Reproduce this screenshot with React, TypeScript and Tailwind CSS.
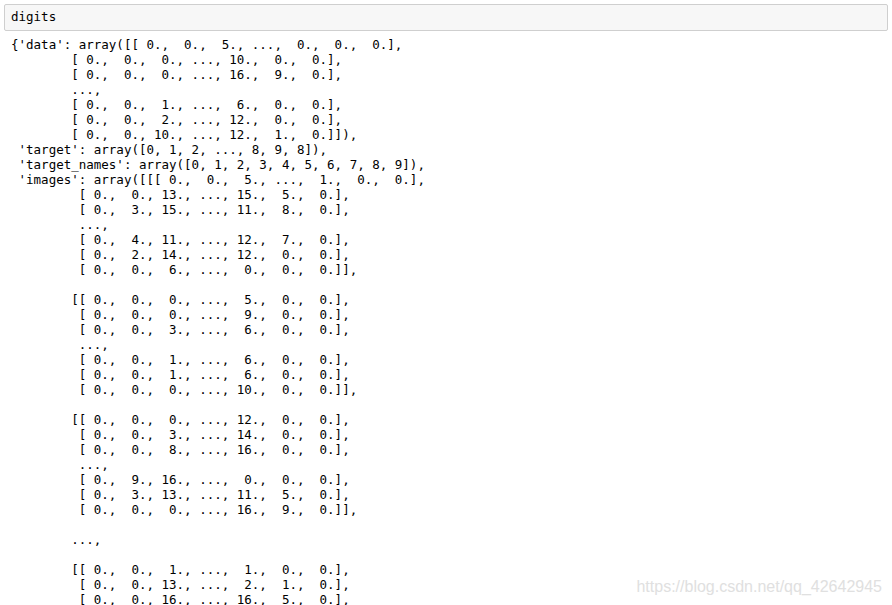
const output = `{'data': array([[ 0.,  0.,  5., ...,  0.,  0.,  0.],
        [ 0.,  0.,  0., ..., 10.,  0.,  0.],
        [ 0.,  0.,  0., ..., 16.,  9.,  0.],
        ...,
        [ 0.,  0.,  1., ...,  6.,  0.,  0.],
        [ 0.,  0.,  2., ..., 12.,  0.,  0.],
        [ 0.,  0., 10., ..., 12.,  1.,  0.]]),
 'target': array([0, 1, 2, ..., 8, 9, 8]),
 'target_names': array([0, 1, 2, 3, 4, 5, 6, 7, 8, 9]),
 'images': array([[[ 0.,  0.,  5., ...,  1.,  0.,  0.],
         [ 0.,  0., 13., ..., 15.,  5.,  0.],
         [ 0.,  3., 15., ..., 11.,  8.,  0.],
         ...,
         [ 0.,  4., 11., ..., 12.,  7.,  0.],
         [ 0.,  2., 14., ..., 12.,  0.,  0.],
         [ 0.,  0.,  6., ...,  0.,  0.,  0.]],
 
        [[ 0.,  0.,  0., ...,  5.,  0.,  0.],
         [ 0.,  0.,  0., ...,  9.,  0.,  0.],
         [ 0.,  0.,  3., ...,  6.,  0.,  0.],
         ...,
         [ 0.,  0.,  1., ...,  6.,  0.,  0.],
         [ 0.,  0.,  1., ...,  6.,  0.,  0.],
         [ 0.,  0.,  0., ..., 10.,  0.,  0.]],
 
        [[ 0.,  0.,  0., ..., 12.,  0.,  0.],
         [ 0.,  0.,  3., ..., 14.,  0.,  0.],
         [ 0.,  0.,  8., ..., 16.,  0.,  0.],
         ...,
         [ 0.,  9., 16., ...,  0.,  0.,  0.],
         [ 0.,  3., 13., ..., 11.,  5.,  0.],
         [ 0.,  0.,  0., ..., 16.,  9.,  0.]],
 
        ...,
 
        [[ 0.,  0.,  1., ...,  1.,  0.,  0.],
         [ 0.,  0., 13., ...,  2.,  1.,  0.],
         [ 0.,  0., 16., ..., 16.,  5.,  0.],`

export default function App() {
  return (
    <div className="relative w-[892px] h-[605px] overflow-hidden bg-white">
      <div className="pt-1 px-1">
        <div className="h-[27px] flex items-center px-[6px] bg-[#f7f7f7] border border-[#cfcfcf] rounded-[2px] font-['DejaVu_Sans_Mono',monospace] text-[12.5px] text-black">
          digits
        </div>
        <pre className="mt-[6px] pl-[7px] font-['DejaVu_Sans_Mono',monospace] text-[12.5px] leading-[15px] text-black">
          {output}
        </pre>
      </div>
      <div className="absolute right-[10px] bottom-[8px] font-['Liberation_Sans',Arial,sans-serif] text-[16px] leading-5 text-[#e0e0e0]">
        https://blog.csdn.net/qq_42642945
      </div>
    </div>
  )
}
